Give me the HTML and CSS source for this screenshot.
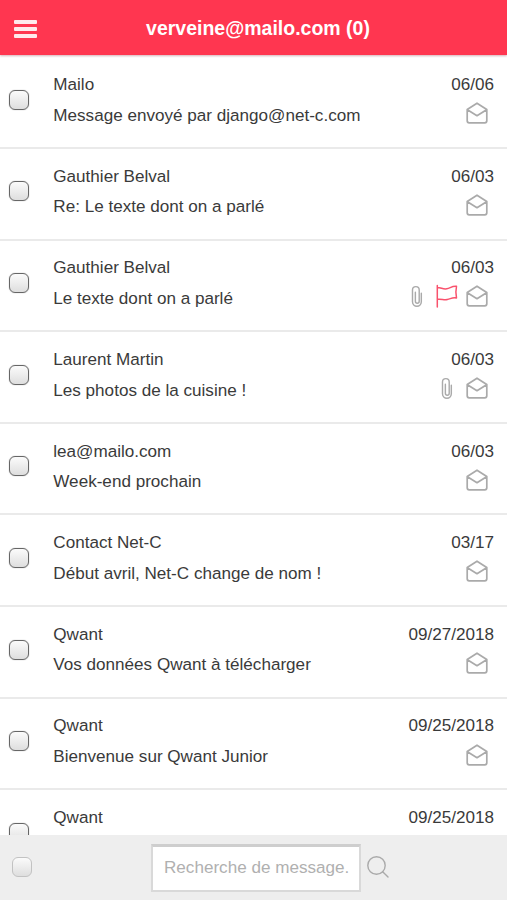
FILE: index.html
```html
<!DOCTYPE html>
<html lang="fr">
<head>
<meta charset="utf-8">
<title>Mailo</title>
<link rel="stylesheet" href="styles.css">
</head>
<body>
<svg class="defs" aria-hidden="true">
  <symbol id="mail" viewBox="0 0 24 24"><path d="M2.200 8.500 12 2.200l9.800 6.300v11.300a2 2 0 0 1-2 2H4.200a2 2 0 0 1-2-2zM2.400 8.700 12 14.700l9.600-6"/></symbol>
  <symbol id="clip" viewBox="0 0 12 24"><path d="M8.300 14.500V5.200a3.500 3.500 0 0 0-7 0v12.300a4.600 4.600 0 0 0 9.200 0V8.500M8.300 14v3a2 2 0 0 1-4 0V7.500"/></symbol>
  <symbol id="flag" viewBox="0 0 24 24"><path d="M2.300 1.500V23M2.300 3.500c4 0 5.500 2 9.500 1.300 3.500-.6 5-3 9.700-2.500-1 4.500-.9 7.500 0 11.700-4-1-5.700.8-9.200 1.500-3.800.7-5.500-.8-10-.2"/></symbol>
</svg>
<div class="app">
  <header class="header">
    <div class="menu"><span></span><span></span><span></span></div>
    <h1>verveine@mailo.com (0)</h1>
  </header>
  <main class="list">
    <article class="row"><i class="check"></i><div class="text"><p>Mailo</p><p>Message envoyé par django@net-c.com</p></div><div class="meta"><p>06/06</p><div class="icons"><svg class="mail"><use href="#mail"/></svg></div></div></article>
    <article class="row"><i class="check"></i><div class="text"><p>Gauthier Belval</p><p>Re: Le texte dont on a parlé</p></div><div class="meta"><p>06/03</p><div class="icons"><svg class="mail"><use href="#mail"/></svg></div></div></article>
    <article class="row"><i class="check"></i><div class="text"><p>Gauthier Belval</p><p>Le texte dont on a parlé</p></div><div class="meta"><p>06/03</p><div class="icons"><svg class="clip"><use href="#clip"/></svg><svg class="flag"><use href="#flag"/></svg><svg class="mail"><use href="#mail"/></svg></div></div></article>
    <article class="row"><i class="check"></i><div class="text"><p>Laurent Martin</p><p>Les photos de la cuisine !</p></div><div class="meta"><p>06/03</p><div class="icons"><svg class="clip"><use href="#clip"/></svg><svg class="mail"><use href="#mail"/></svg></div></div></article>
    <article class="row"><i class="check"></i><div class="text"><p>lea@mailo.com</p><p>Week-end prochain</p></div><div class="meta"><p>06/03</p><div class="icons"><svg class="mail"><use href="#mail"/></svg></div></div></article>
    <article class="row"><i class="check"></i><div class="text"><p>Contact Net-C</p><p>Début avril, Net-C change de nom !</p></div><div class="meta"><p>03/17</p><div class="icons"><svg class="mail"><use href="#mail"/></svg></div></div></article>
    <article class="row"><i class="check"></i><div class="text"><p>Qwant</p><p>Vos données Qwant à télécharger</p></div><div class="meta"><p>09/27/2018</p><div class="icons"><svg class="mail"><use href="#mail"/></svg></div></div></article>
    <article class="row"><i class="check"></i><div class="text"><p>Qwant</p><p>Bienvenue sur Qwant Junior</p></div><div class="meta"><p>09/25/2018</p><div class="icons"><svg class="mail"><use href="#mail"/></svg></div></div></article>
    <article class="row"><i class="check"></i><div class="text"><p>Qwant</p></div><div class="meta"><p>09/25/2018</p></div></article>
  </main>
  <footer class="footer">
    <i class="check muted"></i>
    <div class="search">Recherche de message.</div>
    <svg class="lens" viewBox="0 0 22 22"><circle cx="9.500" cy="9.500" r="8.700"/><path d="m15.700 15.700 5.300 5.300"/></svg>
  </footer>
</div>
</body>
</html>
```
FILE: styles.css
```css
* { box-sizing: border-box; }
body { margin: 0; background: #fff; color: #3a3a3a; font: 17.1px "Liberation Sans", Arial, sans-serif; }
p, h1 { margin: 0; }
.defs { display: none; }
.app { display: flex; flex-direction: column; height: 900px; overflow: hidden; }
.header { flex: none; display: flex; align-items: center; height: 55px; padding: 2px 0 0 14px; background: #ff3650; color: #fff; box-shadow: 0 1px 2px rgba(150, 60, 75, .4); z-index: 1; }
.menu { display: grid; gap: 3.500px; width: 23px; margin-top: 1px; }
.menu span { height: 3.700px; border-radius: 1px; background: #ffe9ec; }
h1 { flex: 1; margin: -2px 28px 0 0; text-align: center; font-size: 19.500px; line-height: 24px; }
.list { flex: 1; min-height: 0; overflow: hidden; padding-top: 2.300px; }
.row { display: flex; height: 91.640px; padding: 11.800px 13px 0 9px; border-bottom: 2px solid #eaeaea; }
.row p { height: 30.600px; padding-top: 1px; line-height: 30.600px; white-space: nowrap; }
.check { flex: none; width: 20px; height: 20px; margin-top: 20.700px; border: 1.500px solid #666; border-radius: 6px; background: linear-gradient(#fbfbfb, #dedede); box-shadow: 0 0 1px rgba(70, 70, 70, .6); }
.text { flex: 1; margin-left: 24.300px; }
.meta { text-align: right; }
.icons { display: flex; justify-content: flex-end; align-items: center; height: 24px; margin: 1.500px 5px 0 0; gap: 7px; }
svg { fill: none; stroke: #aaa; stroke-width: 1.500; stroke-linecap: round; stroke-linejoin: round; }
.mail { width: 24px; height: 24px; stroke-width: 1.700; }
.clip { width: 12px; height: 23px; margin-right: 5px; }
.flag { width: 24px; height: 24px; stroke: #f9526d; margin-right: -1px; }
.footer { flex: none; display: flex; align-items: center; height: 65px; padding-left: 12px; background: #eee; }
.footer .check { margin: -1px 0 0; border-color: #c2c2c2; box-shadow: none; }
.search { width: 210px; height: 48px; margin-left: 119px; padding-left: 11px; border: 2px solid #d9d9d9; border-top-color: #cecece; border-top-width: 3px; background: #fff; color: #b0b0b0; font-size: 17.100px; line-height: 42px; white-space: nowrap; }
.lens { width: 22px; height: 22px; margin: -2px 0 0 5.500px; stroke: #aaa; stroke-width: 1.400; }
```
